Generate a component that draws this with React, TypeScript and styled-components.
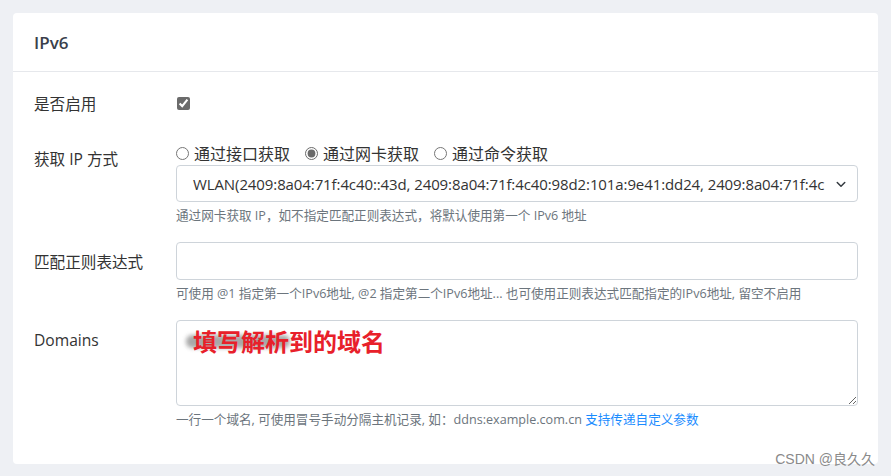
import styled, { createGlobalStyle } from "styled-components";
import { useState } from "react";

const GlobalStyle = createGlobalStyle`
  html, body {
    margin: 0;
    padding: 0;
    background: #eef0f4;
    font-family: "Open Sans", "Noto Sans CJK SC", sans-serif;
    color: #333;
  }
`;

const methods = ["通过接口获取", "通过网卡获取", "通过命令获取"];

const App = () => {
  const [method, setMethod] = useState(1);
  const [enabled, setEnabled] = useState(true);

  return (
    <Page>
      <GlobalStyle />
      <Card>
        <CardHeader>IPv6</CardHeader>
        <CardBody>
          <Row>
            <Label>是否启用</Label>
            <Control>
              <CheckLine>
                <Check type="checkbox" checked={enabled} onChange={() => setEnabled(!enabled)} />
              </CheckLine>
            </Control>
          </Row>

          <Row>
            <Label>获取 IP 方式</Label>
            <Control>
              <RadioGroup>
                {methods.map((m, i) => (
                  <RadioLabel key={m}>
                    <Radio type="radio" name="method" checked={method === i} onChange={() => setMethod(i)} />
                    {m}
                  </RadioLabel>
                ))}
              </RadioGroup>
              <SelectBox>
                <SelectText>
                  WLAN(2409:8a04:71f:4c40::43d, 2409:8a04:71f:4c40:98d2:101a:9e41:dd24, 2409:8a04:71f:4c
                </SelectText>
                <Chevron viewBox="0 0 16 16">
                  <path d="M3 6l5 5 5-5" fill="none" stroke="#343a40" strokeWidth="2" strokeLinecap="round" strokeLinejoin="round" />
                </Chevron>
              </SelectBox>
              <Help>通过网卡获取 IP，如不指定匹配正则表达式，将默认使用第一个 IPv6 地址</Help>
            </Control>
          </Row>

          <Row>
            <Label>匹配正则表达式</Label>
            <Control>
              <Input type="text" />
              <Help>可使用 @1 指定第一个IPv6地址, @2 指定第二个IPv6地址... 也可使用正则表达式匹配指定的IPv6地址, 留空不启用</Help>
            </Control>
          </Row>

          <Row>
            <Label>Domains</Label>
            <Control>
              <AreaWrap>
                <TextArea />
                <Blur />
                <Note>填写解析到的域名</Note>
              </AreaWrap>
              <Help>
                一行一个域名, 可使用冒号手动分隔主机记录, 如：ddns:example.com.cn <Link href="#">支持传递自定义参数</Link>
              </Help>
            </Control>
          </Row>
        </CardBody>
      </Card>
      <Watermark>CSDN @良久久</Watermark>
    </Page>
  );
};

export default App;

const Page = styled.div`
  position: relative;
  width: 891px;
  height: 476px;
  padding: 13px 13px 0 13px;
  box-sizing: border-box;
  overflow: hidden;
`;

const Card = styled.div`
  width: 865px;
  background: #fff;
  border-radius: 4px;
`;

const CardHeader = styled.div`
  height: 59px;
  box-sizing: border-box;
  padding: 0 21px;
  display: flex;
  align-items: center;
  font-size: 17px;
  font-weight: 600;
  color: #3a3f4b;
  border-bottom: 1px solid #e6e8ec;
`;

const CardBody = styled.div`
  padding: 12px 20px 18px 21px;
`;

const Row = styled.div`
  display: grid;
  grid-template-columns: 142px 1fr;
  margin-bottom: 17px;
`;

const Label = styled.div`
  font-size: 15.6px;
  line-height: 22px;
  padding-top: 9px;
  color: #333;
`;

const Control = styled.div`
  display: flex;
  flex-direction: column;
  min-width: 0;
`;

const CheckLine = styled.div`
  height: 38px;
  display: flex;
  align-items: center;
`;

const Check = styled.input`
  width: 13px;
  height: 13px;
  margin: 1px 0 0 1px;
  accent-color: #6b6b6b;
`;

const RadioGroup = styled.div`
  display: flex;
  gap: 15px;
  height: 22px;
  margin-top: 3px;
  align-items: center;
`;

const RadioLabel = styled.label`
  display: flex;
  align-items: center;
  gap: 5px;
  font-size: 16px;
  color: #333;
`;

const Radio = styled.input`
  width: 13px;
  height: 13px;
  margin: 0;
  accent-color: #6b6b6b;
`;

const SelectBox = styled.div`
  position: relative;
  margin-top: 1px;
  height: 37px;
  box-sizing: border-box;
  border: 1px solid #ced4da;
  border-radius: 4px;
  display: flex;
  align-items: center;
  padding: 0 22px 0 16px;
`;

const SelectText = styled.div`
  font-size: 15px;
  color: #333;
  white-space: nowrap;
  letter-spacing: -0.1px;
`;

const Chevron = styled.svg`
  position: absolute;
  right: 10px;
  top: 12px;
  width: 12px;
  height: 12px;
`;

const Help = styled.div`
  margin-top: 5px;
  font-size: 12.6px;
  line-height: 18px;
  color: #6c757d;
  white-space: nowrap;
`;

const Input = styled.input`
  height: 38px;
  box-sizing: border-box;
  border: 1px solid #ced4da;
  border-radius: 4px;
  outline: none;
  padding: 0 12px;
`;

const AreaWrap = styled.div`
  position: relative;
  height: 86px;
`;

const TextArea = styled.textarea`
  width: 100%;
  height: 86px;
  box-sizing: border-box;
  border: 1px solid #ced4da;
  border-radius: 4px;
  outline: none;
  display: block;
  resize: vertical;
`;

const Blur = styled.div`
  position: absolute;
  left: 10px;
  top: 15px;
  width: 104px;
  height: 13px;
  background: #8c8c8c;
  border-radius: 6px;
  filter: blur(2px);
  opacity: 0.75;
`;

const Note = styled.div`
  position: absolute;
  left: 17px;
  top: 6px;
  font-size: 24px;
  font-weight: 700;
  color: #e8202a;
  font-family: "Noto Sans CJK SC", sans-serif;
  line-height: 30px;
`;

const Link = styled.a`
  color: #1a8cff;
  text-decoration: none;
`;

const Watermark = styled.div`
  position: absolute;
  right: 16px;
  bottom: 8px;
  font-size: 14px;
  color: #8a8a8a;
  font-family: "Liberation Sans", "Noto Sans CJK SC", sans-serif;
`;
